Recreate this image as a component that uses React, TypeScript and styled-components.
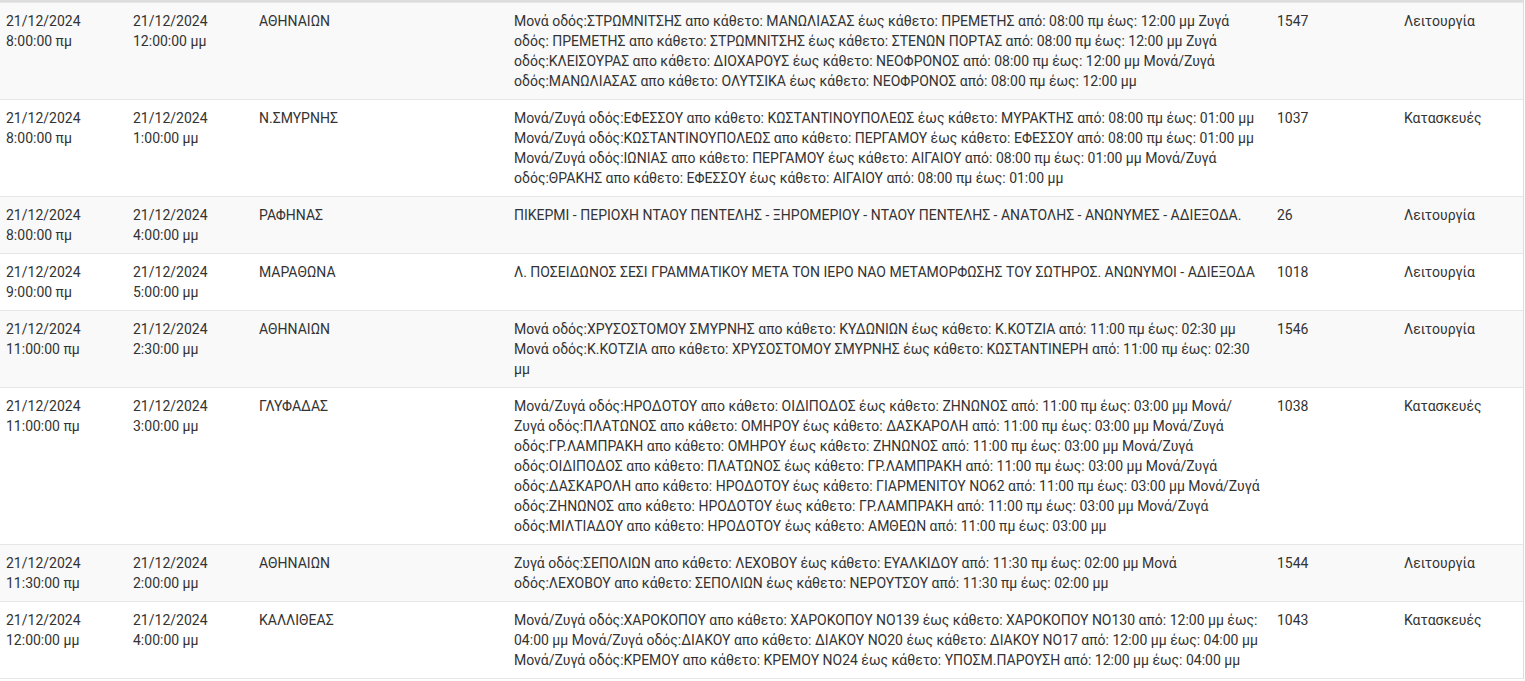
import { createGlobalStyle } from 'styled-components';
import styled from 'styled-components';

const GlobalStyle = createGlobalStyle`
  html, body {
    margin: 0;
    padding: 0;
    background: #fff;
  }
  body {
    font-family: Roboto, 'Noto Sans', sans-serif;
  }
`;

const Frame = styled.div`
  width: 1524px;
  border-top: 2px solid #dddddd;
  border-right: 1px solid #dddddd;
  box-sizing: border-box;
`;

const Table = styled.table`
  width: 1523px;
  border-collapse: collapse;
  table-layout: fixed;
  font-size: 14px;
  line-height: 20px;
  color: #333333;
`;

const Row = styled.tr<{ $striped: boolean }>`
  background: ${(p) => (p.$striped ? '#f9f9f9' : '#ffffff')};
`;

const Cell = styled.td<{ $text?: boolean }>`
  padding: 8px ${(p) => (p.$text ? '10px' : '6px')} 8px 6px;
  vertical-align: top;
  border-top: 1px solid #e6e6e6;
  border-bottom: 1px solid #e6e6e6;
  text-align: left;
`;

const Line = styled.span`
  display: block;
  white-space: nowrap;
`;

interface Closure {
  startDate: string;
  startTime: string;
  endDate: string;
  endTime: string;
  area: string;
  description: string;
  code: string;
  kind: string;
}

const closures: Closure[] = [
  {
    startDate: '21/12/2024',
    startTime: '8:00:00 πμ',
    endDate: '21/12/2024',
    endTime: '12:00:00 μμ',
    area: 'ΑΘΗΝΑΙΩΝ',
    description:
      'Μονά οδός:ΣΤΡΩΜΝΙΤΣΗΣ απο κάθετο: ΜΑΝΩΛΙΑΣΑΣ έως κάθετο: ΠΡΕΜΕΤΗΣ από: 08:00 πμ έως: 12:00 μμ Ζυγά οδός: ΠΡΕΜΕΤΗΣ απο κάθετο: ΣΤΡΩΜΝΙΤΣΗΣ έως κάθετο: ΣΤΕΝΩΝ ΠΟΡΤΑΣ από: 08:00 πμ έως: 12:00 μμ Ζυγά οδός:ΚΛΕΙΣΟΥΡΑΣ απο κάθετο: ΔΙΟΧΑΡΟΥΣ έως κάθετο: ΝΕΟΦΡΟΝΟΣ από: 08:00 πμ έως: 12:00 μμ Μονά/Ζυγά οδός:ΜΑΝΩΛΙΑΣΑΣ απο κάθετο: ΟΛΥΤΣΙΚΑ έως κάθετο: ΝΕΟΦΡΟΝΟΣ από: 08:00 πμ έως: 12:00 μμ',
    code: '1547',
    kind: 'Λειτουργία',
  },
  {
    startDate: '21/12/2024',
    startTime: '8:00:00 πμ',
    endDate: '21/12/2024',
    endTime: '1:00:00 μμ',
    area: 'Ν.ΣΜΥΡΝΗΣ',
    description:
      'Μονά/Ζυγά οδός:ΕΦΕΣΣΟΥ απο κάθετο: ΚΩΣΤΑΝΤΙΝΟΥΠΟΛΕΩΣ έως κάθετο: ΜΥΡΑΚΤΗΣ από: 08:00 πμ έως: 01:00 μμ Μονά/Ζυγά οδός:ΚΩΣΤΑΝΤΙΝΟΥΠΟΛΕΩΣ απο κάθετο: ΠΕΡΓΑΜΟΥ έως κάθετο: ΕΦΕΣΣΟΥ από: 08:00 πμ έως: 01:00 μμ Μονά/Ζυγά οδός:ΙΩΝΙΑΣ απο κάθετο: ΠΕΡΓΑΜΟΥ έως κάθετο: ΑΙΓΑΙΟΥ από: 08:00 πμ έως: 01:00 μμ Μονά/Ζυγά οδός:ΘΡΑΚΗΣ απο κάθετο: ΕΦΕΣΣΟΥ έως κάθετο: ΑΙΓΑΙΟΥ από: 08:00 πμ έως: 01:00 μμ',
    code: '1037',
    kind: 'Κατασκευές',
  },
  {
    startDate: '21/12/2024',
    startTime: '8:00:00 πμ',
    endDate: '21/12/2024',
    endTime: '4:00:00 μμ',
    area: 'ΡΑΦΗΝΑΣ',
    description:
      'ΠΙΚΕΡΜΙ - ΠΕΡΙΟΧΗ ΝΤΑΟΥ ΠΕΝΤΕΛΗΣ - ΞΗΡΟΜΕΡΙΟΥ - ΝΤΑΟΥ ΠΕΝΤΕΛΗΣ - ΑΝΑΤΟΛΗΣ - ΑΝΩΝΥΜΕΣ - ΑΔΙΕΞΟΔΑ.',
    code: '26',
    kind: 'Λειτουργία',
  },
  {
    startDate: '21/12/2024',
    startTime: '9:00:00 πμ',
    endDate: '21/12/2024',
    endTime: '5:00:00 μμ',
    area: 'ΜΑΡΑΘΩΝΑ',
    description:
      'Λ. ΠΟΣΕΙΔΩΝΟΣ ΣΕΣΙ ΓΡΑΜΜΑΤΙΚΟΥ ΜΕΤΑ ΤΟΝ ΙΕΡΟ ΝΑΟ ΜΕΤΑΜΟΡΦΩΣΗΣ ΤΟΥ ΣΩΤΗΡΟΣ. ΑΝΩΝΥΜΟΙ - ΑΔΙΕΞΟΔΑ',
    code: '1018',
    kind: 'Λειτουργία',
  },
  {
    startDate: '21/12/2024',
    startTime: '11:00:00 πμ',
    endDate: '21/12/2024',
    endTime: '2:30:00 μμ',
    area: 'ΑΘΗΝΑΙΩΝ',
    description:
      'Μονά οδός:ΧΡΥΣΟΣΤΟΜΟΥ ΣΜΥΡΝΗΣ απο κάθετο: ΚΥΔΩΝΙΩΝ έως κάθετο: Κ.ΚΟΤΖΙΑ από: 11:00 πμ έως: 02:30 μμ Μονά οδός:Κ.ΚΟΤΖΙΑ απο κάθετο: ΧΡΥΣΟΣΤΟΜΟΥ ΣΜΥΡΝΗΣ έως κάθετο: ΚΩΣΤΑΝΤΙΝΕΡΗ από: 11:00 πμ έως: 02:30 μμ',
    code: '1546',
    kind: 'Λειτουργία',
  },
  {
    startDate: '21/12/2024',
    startTime: '11:00:00 πμ',
    endDate: '21/12/2024',
    endTime: '3:00:00 μμ',
    area: 'ΓΛΥΦΑΔΑΣ',
    description:
      'Μονά/Ζυγά οδός:ΗΡΟΔΟΤΟΥ απο κάθετο: ΟΙΔΙΠΟΔΟΣ έως κάθετο: ΖΗΝΩΝΟΣ από: 11:00 πμ έως: 03:00 μμ Μονά/Ζυγά οδός:ΠΛΑΤΩΝΟΣ απο κάθετο: ΟΜΗΡΟΥ έως κάθετο: ΔΑΣΚΑΡΟΛΗ από: 11:00 πμ έως: 03:00 μμ Μονά/Ζυγά οδός:ΓΡ.ΛΑΜΠΡΑΚΗ απο κάθετο: ΟΜΗΡΟΥ έως κάθετο: ΖΗΝΩΝΟΣ από: 11:00 πμ έως: 03:00 μμ Μονά/Ζυγά οδός:ΟΙΔΙΠΟΔΟΣ απο κάθετο: ΠΛΑΤΩΝΟΣ έως κάθετο: ΓΡ.ΛΑΜΠΡΑΚΗ από: 11:00 πμ έως: 03:00 μμ Μονά/Ζυγά οδός:ΔΑΣΚΑΡΟΛΗ απο κάθετο: ΗΡΟΔΟΤΟΥ έως κάθετο: ΓΙΑΡΜΕΝΙΤΟΥ ΝΟ62 από: 11:00 πμ έως: 03:00 μμ Μονά/Ζυγά οδός:ΖΗΝΩΝΟΣ απο κάθετο: ΗΡΟΔΟΤΟΥ έως κάθετο: ΓΡ.ΛΑΜΠΡΑΚΗ από: 11:00 πμ έως: 03:00 μμ Μονά/Ζυγά οδός:ΜΙΛΤΙΑΔΟΥ απο κάθετο: ΗΡΟΔΟΤΟΥ έως κάθετο: ΑΜΘΕΩΝ από: 11:00 πμ έως: 03:00 μμ',
    code: '1038',
    kind: 'Κατασκευές',
  },
  {
    startDate: '21/12/2024',
    startTime: '11:30:00 πμ',
    endDate: '21/12/2024',
    endTime: '2:00:00 μμ',
    area: 'ΑΘΗΝΑΙΩΝ',
    description:
      'Ζυγά οδός:ΣΕΠΟΛΙΩΝ απο κάθετο: ΛΕΧΟΒΟΥ έως κάθετο: ΕΥΑΛΚΙΔΟΥ από: 11:30 πμ έως: 02:00 μμ Μονά οδός:ΛΕΧΟΒΟΥ απο κάθετο: ΣΕΠΟΛΙΩΝ έως κάθετο: ΝΕΡΟΥΤΣΟΥ από: 11:30 πμ έως: 02:00 μμ',
    code: '1544',
    kind: 'Λειτουργία',
  },
  {
    startDate: '21/12/2024',
    startTime: '12:00:00 μμ',
    endDate: '21/12/2024',
    endTime: '4:00:00 μμ',
    area: 'ΚΑΛΛΙΘΕΑΣ',
    description:
      'Μονά/Ζυγά οδός:ΧΑΡΟΚΟΠΟΥ απο κάθετο: ΧΑΡΟΚΟΠΟΥ ΝΟ139 έως κάθετο: ΧΑΡΟΚΟΠΟΥ ΝΟ130 από: 12:00 μμ έως: 04:00 μμ Μονά/Ζυγά οδός:ΔΙΑΚΟΥ απο κάθετο: ΔΙΑΚΟΥ ΝΟ20 έως κάθετο: ΔΙΑΚΟΥ ΝΟ17 από: 12:00 μμ έως: 04:00 μμ Μονά/Ζυγά οδός:ΚΡΕΜΟΥ απο κάθετο: ΚΡΕΜΟΥ ΝΟ24 έως κάθετο: ΥΠΟΣΜ.ΠΑΡΟΥΣΗ από: 12:00 μμ έως: 04:00 μμ',
    code: '1043',
    kind: 'Κατασκευές',
  },
];

export default function App() {
  return (
    <>
      <GlobalStyle />
      <Frame>
        <Table>
          <colgroup>
            <col style={{ width: 127 }} />
            <col style={{ width: 126 }} />
            <col style={{ width: 255 }} />
            <col style={{ width: 763 }} />
            <col style={{ width: 127 }} />
            <col style={{ width: 125 }} />
          </colgroup>
          <tbody>
            {closures.map((c, i) => (
              <Row key={i} $striped={i % 2 === 0}>
                <Cell>
                  <Line>{c.startDate}</Line>
                  <Line>{c.startTime}</Line>
                </Cell>
                <Cell>
                  <Line>{c.endDate}</Line>
                  <Line>{c.endTime}</Line>
                </Cell>
                <Cell>{c.area}</Cell>
                <Cell $text>{c.description}</Cell>
                <Cell>{c.code}</Cell>
                <Cell>{c.kind}</Cell>
              </Row>
            ))}
          </tbody>
        </Table>
      </Frame>
    </>
  );
}
